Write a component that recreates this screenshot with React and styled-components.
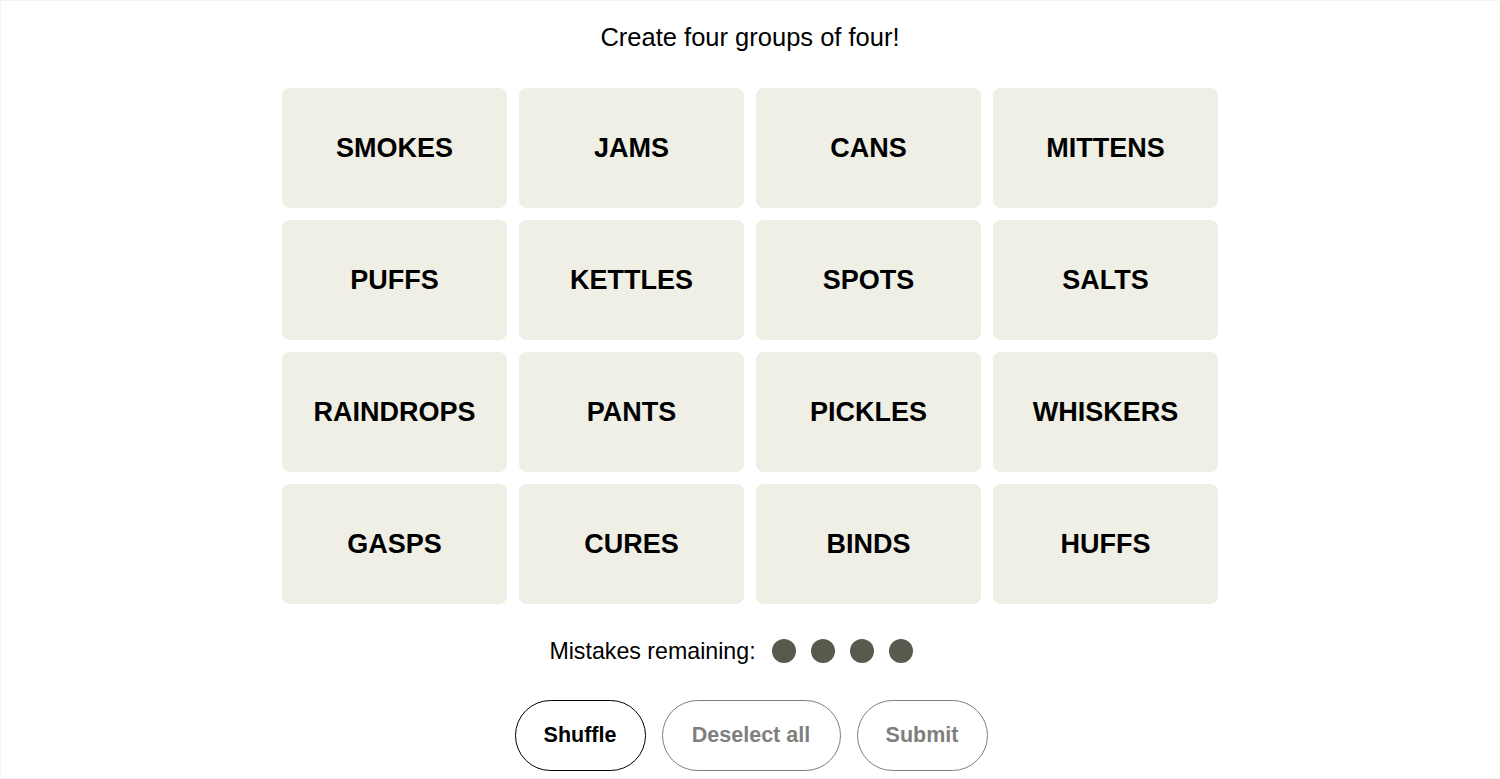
import React from "react";
import styled, { createGlobalStyle } from "styled-components";

const Global = createGlobalStyle`
  html, body { margin: 0; padding: 0; background: #fff; }
  * { box-sizing: border-box; }
`;

const Page = styled.div`
  height: 779px;
  border: 1px solid #f3f3f3;
  display: flex;
  flex-direction: column;
  align-items: center;
  font-family: "Liberation Sans", Arial, sans-serif;
  color: #000;
  padding-top: 21px;
`;

const Title = styled.h2`
  margin: 0;
  font-size: 25.5px;
  line-height: 30px;
  font-weight: 400;
`;

const Grid = styled.div`
  margin-top: 36px;
  display: grid;
  grid-template-columns: repeat(4, 225px);
  grid-auto-rows: 120px;
  gap: 12px;
`;

const Tile = styled.button`
  border: none;
  border-radius: 8px;
  background: #efefe6;
  font-family: inherit;
  font-size: 27px;
  font-weight: 700;
  color: #000;
  display: flex;
  align-items: center;
  justify-content: center;
  padding: 0;
  cursor: pointer;
`;

const Mistakes = styled.div`
  margin-top: 35px;
  height: 24px;
  display: flex;
  align-items: center;
  font-size: 23.2px;
  padding-top: 1px;
  padding-right: 38px;
`;

const Dots = styled.div`
  display: flex;
  gap: 15px;
  margin-left: 16px;
  margin-top: -1px;
`;

const Dot = styled.span`
  width: 24px;
  height: 24px;
  border-radius: 50%;
  background: #5a594e;
`;

const Buttons = styled.div`
  margin-top: 37px;
  display: flex;
  gap: 16px;
  padding-left: 2px;
`;

const Pill = styled.button`
  height: 71px;
  min-width: ${(p) => p.$w}px;
  border-radius: 36px;
  background: #fff;
  font-family: inherit;
  font-size: 21.5px;
  font-weight: 700;
  padding: 0 20px;
  color: ${(p) => (p.$active ? "#000" : "#7f7f7f")};
  border: ${(p) => (p.$active ? "1.5px solid #000" : "1.5px solid #7f7f7f")};
  cursor: pointer;
`;

const words = [
  "SMOKES", "JAMS", "CANS", "MITTENS",
  "PUFFS", "KETTLES", "SPOTS", "SALTS",
  "RAINDROPS", "PANTS", "PICKLES", "WHISKERS",
  "GASPS", "CURES", "BINDS", "HUFFS",
];

export default function App() {
  return (
    <>
      <Global />
      <Page>
        <Title>Create four groups of four!</Title>
        <Grid>
          {words.map((w) => (
            <Tile key={w}>{w}</Tile>
          ))}
        </Grid>
        <Mistakes>
          Mistakes remaining:
          <Dots>
            <Dot />
            <Dot />
            <Dot />
            <Dot />
          </Dots>
        </Mistakes>
        <Buttons>
          <Pill $active $w={131}>Shuffle</Pill>
          <Pill $w={179}>Deselect all</Pill>
          <Pill $w={131}>Submit</Pill>
        </Buttons>
      </Page>
    </>
  );
}
